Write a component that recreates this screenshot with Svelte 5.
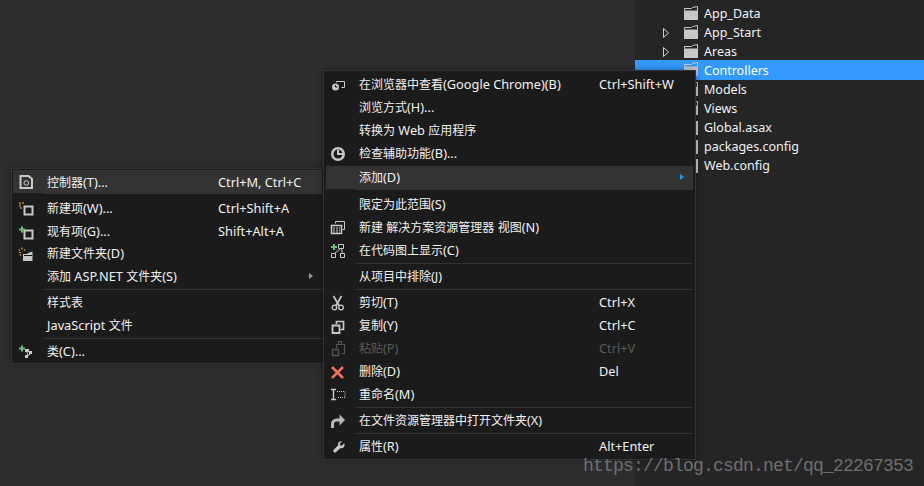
<script lang="ts">
  // Solution explorer with the nested "add" context menu open

  const tree = [
    { name: 'App_Data', icon: 'folder' },
    { name: 'App_Start', icon: 'folder', arrow: true },
    { name: 'Areas', icon: 'folder', arrow: true },
    { name: 'Controllers', icon: 'folder', selected: true },
    { name: 'Models', icon: 'folder' },
    { name: 'Views', icon: 'folder' },
    { name: 'Global.asax', icon: 'file' },
    { name: 'packages.config', icon: 'file' },
    { name: 'Web.config', icon: 'file' }
  ];

  const addMenu = [
    { label: '控制器(T)...', key: 'Ctrl+M, Ctrl+C', icon: 'controller', active: true },
    { sep: true },
    { label: '新建项(W)...', key: 'Ctrl+Shift+A', icon: 'newItem' },
    { label: '现有项(G)...', key: 'Shift+Alt+A', icon: 'existing' },
    { label: '新建文件夹(D)', icon: 'newFolder', tight: true },
    { label: '添加 ASP.NET 文件夹(S)', sub: true },
    { sep: true },
    { label: '样式表' },
    { label: 'JavaScript 文件' },
    { sep: true },
    { label: '类(C)...', icon: 'addClass' }
  ];

  const mainMenu = [
    { label: '在浏览器中查看(Google Chrome)(B)', key: 'Ctrl+Shift+W', icon: 'browser' },
    { label: '浏览方式(H)...' },
    { label: '转换为 Web 应用程序' },
    { label: '检查辅助功能(B)...', icon: 'access' },
    { label: '添加(D)', sub: true, active: true },
    { sep: true },
    { label: '限定为此范围(S)' },
    { label: '新建 解决方案资源管理器 视图(N)', icon: 'newView' },
    { label: '在代码图上显示(C)', icon: 'codeMap' },
    { sep: true },
    { label: '从项目中排除(J)' },
    { sep: true },
    { label: '剪切(T)', key: 'Ctrl+X', icon: 'cut' },
    { label: '复制(Y)', key: 'Ctrl+C', icon: 'copy' },
    { label: '粘贴(P)', key: 'Ctrl+V', icon: 'paste', disabled: true },
    { label: '删除(D)', key: 'Del', icon: 'remove' },
    { label: '重命名(M)', icon: 'rename' },
    { sep: true },
    { label: '在文件资源管理器中打开文件夹(X)', icon: 'open' },
    { sep: true },
    { label: '属性(R)', key: 'Alt+Enter', icon: 'wrench' }
  ];

  // latin runs are set a little larger, the original UI font is wider there
  const runs = (text: string) =>
    text.split(/([\x00-\x7f]+)/).filter(Boolean).map((t) => ({ t, latin: /^[\x00-\x7f]/.test(t) }));

  const G = '#c8c8c8';
  const BG = '#1b1b1c';
  const GREEN = '#6cc070';
  const ORANGE = '#d9a441';
  const DIM = '#555';

  const icons: Record<string, string> = {
    folder: `<path d="M0 4.500h14V14H0z" fill="${G}"/><path d="M.5 4.500v-2h7l1-1 5-1v4" fill="none" stroke="${G}"/>`,
    file: `<path d="M2 1h12v14H2z" fill="${G}"/>`,
    browser: `<path d="M6.500 5.500v-1h8v6h-3" fill="none" stroke="${G}"/><circle cx="5.500" cy="10" r="3.500" fill="${G}"/><path d="M5.500 8v2h2" fill="none" stroke="${BG}"/>`,
    access: `<circle cx="8" cy="8" r="7" fill="${G}"/><circle cx="8" cy="8" r="4.500" fill="${BG}"/><path d="M7 4h2v3h4v2H7z" fill="${G}"/>`,
    newView: `<path d="M5.500 3.500v-2h9v8h-2" fill="none" stroke="${G}"/><path d="M1.500 5.500h10v8h-10z" fill="none" stroke="${G}" stroke-width="1.500"/><path d="M3 8h7M3 10h7M3 12h7" stroke="${G}" stroke-dasharray="2 1"/>`,
    codeMap: `<path d="M4 1v6M1 4h6" stroke="${GREEN}" stroke-width="2"/><path d="M8.500 1.500h5v4h-5zM1.500 10.500h4v4h-4zM10.500 10.500h4v4h-4zM10.500 5.500l-6 5M11.500 5.500l1 5" fill="none" stroke="${G}"/>`,
    cut: `<path d="M3.500 1l5.500 9.500M11.500 1L6 10.500" stroke="${G}" stroke-width="1.700" fill="none"/><circle cx="4.500" cy="12.500" r="2.300" fill="none" stroke="${G}" stroke-width="1.300"/><circle cx="11" cy="12.500" r="2.300" fill="none" stroke="${G}" stroke-width="1.300"/>`,
    copy: `<path d="M6.500 6V3.500h7v8h-3" fill="none" stroke="${G}" stroke-width="1.700"/><path d="M2.500 7.500h7v7.500h-7z" fill="none" stroke="${G}" stroke-width="1.800"/>`,
    paste: `<path d="M8.500.5h3v3h-3zM6.500 7V3.500h2M11.500 3.500h3v9h-3" fill="none" stroke="${DIM}" stroke-width="1.200"/><path d="M2.500 8.500h6v6h-6z" fill="none" stroke="${DIM}" stroke-width="1.300"/>`,
    remove: `<path d="M2 3l11 11M13 3L2 14" stroke="#f1705c" stroke-width="2.600"/>`,
    rename: `<path d="M1 2.500h5M1 12.500h5M3.500 2.500v10" stroke="${G}" fill="none" stroke-width="1.400"/><path d="M7 4.500h8v6H7" stroke="${G}" fill="none" stroke-dasharray="1 1"/>`,
    open: `<path d="M2.500 15v-4a4 4 0 0 1 4-4H11" fill="none" stroke="#b8b8b8" stroke-width="3"/><path d="M9.500 1.500L15 7l-5.500 5.500z" fill="#b8b8b8"/>`,
    wrench: `<path transform="translate(2.500 1.500) scale(.8)" d="M14.500 3.500l-3 3-2-.5-.5-2 3-3a4 4 0 0 0-5 5L1.500 11.500a2 2 0 0 0 3 3L10 9.500a4 4 0 0 0 4.500-6z" fill="${G}"/>`,
    controller: `<path d="M2.500 2h8l3.500 3v9H2.500z" fill="none" stroke="${G}" stroke-width="2"/><circle cx="8.300" cy="9" r="2.300" fill="none" stroke="${G}"/>`,
    newItem: `<path d="M6.500 5.500h8v8h-8z" fill="none" stroke="${G}" stroke-width="2"/><path d="M1 3h2M2 1v1M5 1v2M1 5h2M3 6v2" stroke="${ORANGE}" stroke-width="1.200"/>`,
    existing: `<path d="M6.500 6.500h8v8h-8z" fill="none" stroke="${G}" stroke-width="2"/><path d="M4 2.500v6M1 5.500h6" stroke="${GREEN}" stroke-width="2"/>`,
    newFolder: `<path d="M5 8h4l1-1 4.500-1.500V15H5z" fill="${G}"/><path d="M6 9.500h8" stroke="${BG}"/><path d="M1 3.500l1 1M4 1.500v2M7 3.500l-1 1M1 6.500h2M2 9.500l1-1" stroke="${ORANGE}" stroke-width="1.200"/>`,
    addClass: `<path d="M4 1.500v6M1 4.500h6" stroke="${GREEN}" stroke-width="2"/><path d="M7 5h4v3H7zM11 7h3v3h-3zM7 11h3v3H7z" fill="${G}"/><path d="M9 8l1 4 3-3" stroke="${G}" fill="none"/>`
  };
</script>

{#snippet menu(items: any[], cls: string)}
  <div class="menu {cls}">
    {#each items as item}
      {#if item.sep}
        <div class="sep"></div>
      {:else}
        <div class="row" class:active={item.active} class:disabled={item.disabled} class:tight={item.tight}>
          <span class="ico">
            {#if item.icon}
              <svg width="16" height="16" viewBox="0 0 16 16">{@html icons[item.icon]}</svg>
            {/if}
          </span>
          <span class="label">
            {#each runs(item.label) as run}
              <span class:latin={run.latin}>{run.t}</span>
            {/each}
          </span>
          <span class="key">{item.key ?? ''}</span>
          {#if item.sub}
            <span class="caret"></span>
          {/if}
        </div>
      {/if}
    {/each}
  </div>
{/snippet}

<div class="screen">
  <div class="editor"></div>
  <div class="explorer">
    {#each tree as node}
      <div class="node" class:selected={node.selected}>
        <span class="twisty">
          {#if node.arrow}
            <svg width="9" height="12" viewBox="0 0 9 12"><path d="M2.500 1.500l5 4.500-5 4.500z" fill="none" stroke="#d0d0d0"/></svg>
          {/if}
        </span>
        <svg class="node-ico" width="16" height="16" viewBox="0 0 16 16">{@html icons[node.icon]}</svg>
        <span class="name">{node.name}</span>
      </div>
    {/each}
  </div>

  {@render menu(addMenu, 'add-menu')}
  {@render menu(mainMenu, 'main-menu')}

  <div class="mark">https://blog.csdn.net/qq_22267353</div>
</div>

<style>
  :global(body) {
    margin: 0;
    background: #2d2d30;
  }

  .screen {
    position: relative;
    display: flex;
    width: 924px;
    height: 486px;
    overflow: hidden;
    font-family: "Noto Sans", "Noto Sans CJK SC", sans-serif;
    font-size: 12px;
    color: #f1f1f1;
  }

  .editor {
    flex: 1;
    background: #2d2d30;
  }

  .explorer {
    width: 289px;
    padding-top: 4px;
    background: #252526;
  }

  .node {
    display: flex;
    align-items: center;
    height: 19px;
    padding-left: 26px;
  }

  .node.selected {
    height: 20px;
    margin-top: -1px;
    background: #3399ff;
    color: #fff;
  }

  .twisty {
    display: flex;
    width: 23px;
  }

  .node-ico {
    margin-right: 4px;
  }

  .name {
    font-size: 12.500px;
  }

  .menu {
    position: absolute;
    box-sizing: border-box;
    background: #1b1b1c;
    border: 1px solid #333337;
    box-shadow: 0 0 6px rgba(0, 0, 0, 0.35);
  }

  .add-menu {
    left: 11px;
    top: 168px;
    width: 313px;
    padding: 1px 1px 0;
  }

  .main-menu {
    left: 323px;
    top: 70px;
    width: 373px;
    padding: 2px 2px 1px;
  }

  .row {
    position: relative;
    display: grid;
    align-items: center;
    height: 23px;
    white-space: nowrap;
  }

  .row.tight {
    height: 22px;
  }

  .add-menu .row {
    grid-template-columns: 34px 171px 1fr;
  }

  .main-menu .row {
    grid-template-columns: 33px 240px 1fr;
  }

  .row.active {
    background: #333334;
  }

  .main-menu .row.active {
    margin-top: 1px;
  }

  .row.disabled {
    color: #5a5a5a;
  }

  .label,
  .key {
    padding-bottom: 2px;
  }

  .add-menu .row.active .label,
  .add-menu .row.active .key {
    padding-bottom: 0;
  }

  .latin {
    font-size: 12.750px;
  }

  .key {
    font-size: 12.750px;
  }

  .ico {
    display: flex;
    padding-left: 4px;
  }

  .add-menu .ico {
    padding-left: 5px;
  }

  .sep {
    height: 1px;
    margin: 1px 0 1px 29px;
    background: #333337;
  }

  .add-menu .sep {
    margin-left: 30px;
  }

  .row.active + .sep {
    margin-top: 0;
    margin-bottom: 3px;
  }

  .caret {
    position: absolute;
    right: 9px;
    top: 8px;
    border-left: 4px solid #999;
    border-top: 3.500px solid transparent;
    border-bottom: 3.500px solid transparent;
  }

  .main-menu .caret {
    border-left-color: #1c97ea;
  }

  .mark {
    position: absolute;
    left: 583px;
    top: 456px;
    font-family: "Liberation Mono", monospace;
    font-size: 18px;
    letter-spacing: -0.800px;
    color: #6e6e6e;
  }
</style>
